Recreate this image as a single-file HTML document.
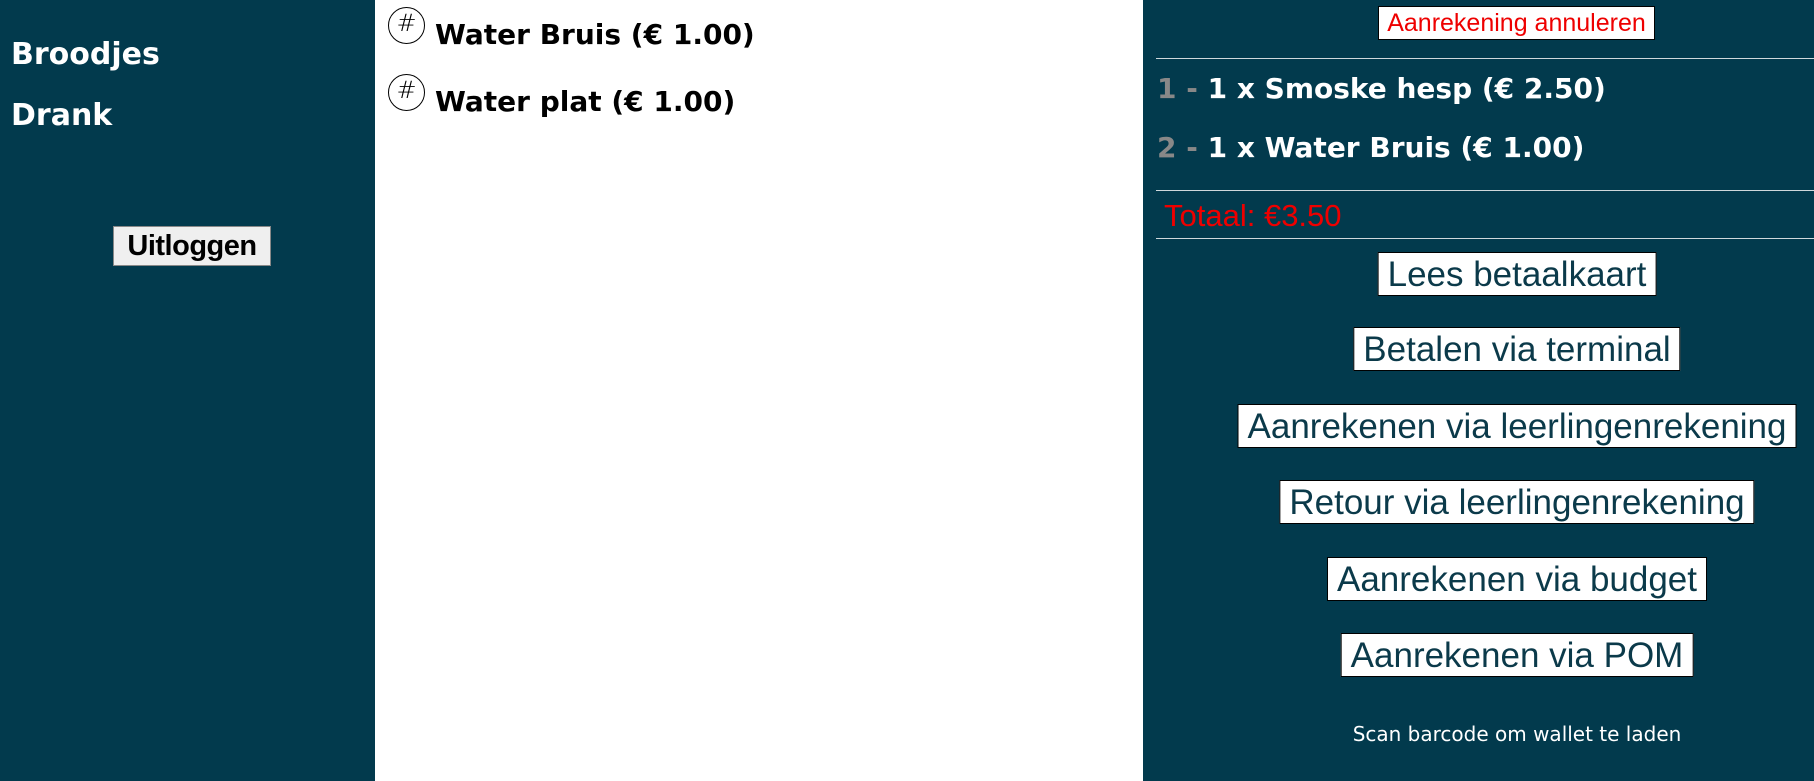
<!DOCTYPE html>
<html><head><meta charset="utf-8"><style>
*{margin:0;padding:0;box-sizing:border-box}
body{width:1814px;height:781px;overflow:hidden;background:#fff;font-family:"Liberation Sans",Arial,sans-serif;position:relative}
.left{position:absolute;left:0;top:0;width:375px;height:781px;background:#023a4d}
.right{position:absolute;left:1143px;top:0;width:671px;height:781px;background:#023a4d}
.abs{position:absolute;white-space:nowrap}
.dv{font-family:"DejaVu Sans",Verdana,sans-serif;font-weight:bold}
.cat{color:#fff;font-size:30px;left:11px}
.logout{left:113px;top:226px;width:158px;height:40px;background:#efefef;border:1px solid #888;font-weight:bold;font-size:29px;text-align:center;line-height:38px;color:#000;letter-spacing:-0.5px}
.prod{left:435px;font-size:28px;color:#000}
.circ{width:37px;height:37px;border:1px solid #000;border-radius:50%;left:388px;font-size:24px;text-align:center;line-height:30px;font-family:"DejaVu Sans",sans-serif;font-weight:200}
.hr{left:1156px;width:658px;height:1px;background:#cfd8dc}
.item{left:1157px;font-size:28px;color:#fff}
.item span{color:#888}
.btn{background:#fff;border:1px solid #000;color:#0b3a4a;font-size:35px;text-align:center;transform:translateX(-50%);left:1517px;padding:0 9px;height:44px;line-height:44px}
</style></head><body>
<div class="left"></div>
<div class="right"></div>
<div class="abs cat dv" style="top:37px">Broodjes</div>
<div class="abs cat dv" style="top:98px">Drank</div>
<div class="abs logout">Uitloggen</div>
<div class="abs circ" style="top:7px">#</div>
<div class="abs prod dv" style="top:18px">Water Bruis (€ 1.00)</div>
<div class="abs circ" style="top:74px">#</div>
<div class="abs prod dv" style="top:85px">Water plat (€ 1.00)</div>

<div class="abs" style="left:1378px;top:6px;width:277px;height:34px;background:#fff;border:1px solid #000;color:#e00;font-size:25px;text-align:center;line-height:32px">Aanrekening annuleren</div>
<div class="abs hr" style="top:58px"></div>
<div class="abs item dv" style="top:72px"><span>1 - </span>1 x Smoske hesp (€ 2.50)</div>
<div class="abs item dv" style="top:131px"><span>2 - </span>1 x Water Bruis (€ 1.00)</div>
<div class="abs hr" style="top:190px"></div>
<div class="abs" style="left:1164px;top:198px;color:#e00;font-size:31px">Totaal: €3.50</div>
<div class="abs hr" style="top:238px"></div>
<div class="abs btn" style="top:252px">Lees betaalkaart</div>
<div class="abs btn" style="top:327px">Betalen via terminal</div>
<div class="abs btn" style="top:404px">Aanrekenen via leerlingenrekening</div>
<div class="abs btn" style="top:480px">Retour via leerlingenrekening</div>
<div class="abs btn" style="top:557px">Aanrekenen via budget</div>
<div class="abs btn" style="top:633px">Aanrekenen via POM</div>
<div class="abs" style="left:1517px;transform:translateX(-50%);top:722px;color:#fff;font-size:20px;font-family:'DejaVu Sans',Verdana,sans-serif">Scan barcode om wallet te laden</div>
</body></html>
